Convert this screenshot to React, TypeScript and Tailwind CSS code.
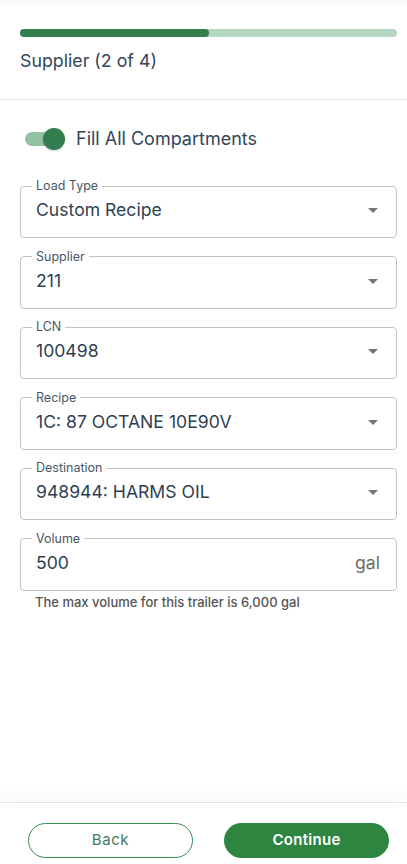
import React from 'react';

interface FieldProps {
  label: string;
  value: string;
  suffix?: string;
  select?: boolean;
}

const ArrowDropDown = () => (
  <svg viewBox="0 0 24 24" className="w-6 h-6 fill-[#757575] shrink-0">
    <path d="M7 10l5 5 5-5z" />
  </svg>
);

const Field = ({ label, value, suffix, select = true }: FieldProps) => (
  <fieldset className="border border-[#c4c4c4] rounded-[4px] px-[15px] m-0 min-w-0">
    <legend className="ml-[-4px] px-[4px] text-[12.5px] leading-[16px] text-[#4a5668]">{label}</legend>
    <div className="h-[43px] pt-[4px] flex items-start justify-between">
      <span className="text-[17.6px] leading-[24px] text-[#2f3f52]">{value}</span>
      {select && (
        <span className="mr-[-4px]">
          <ArrowDropDown />
        </span>
      )}
      {suffix && <span className="text-[17.6px] leading-[24px] text-[#6b6b6b] pr-[1px]">{suffix}</span>}
    </div>
  </fieldset>
);

export default function App() {
  const fields: FieldProps[] = [
    { label: 'Load Type', value: 'Custom Recipe' },
    { label: 'Supplier', value: '211' },
    { label: 'LCN', value: '100498' },
    { label: 'Recipe', value: '1C: 87 OCTANE 10E90V' },
    { label: 'Destination', value: '948944: HARMS OIL' },
  ];

  return (
    <div
      className="h-screen w-full flex flex-col bg-white overflow-hidden"
      style={{ fontFamily: 'Inter, "Noto Sans", sans-serif' }}
    >
      <div className="flex-1 flex flex-col">
        <div className="pl-5 pr-[10px] pt-[29px] pb-[28px] border-b border-[#e8e8e8] shadow-[inset_0_10px_10px_-8px_rgba(0,0,0,0.06)]">
          <div className="h-[8px] rounded-full bg-[#b4d6c3] flex">
            <div className="w-1/2 h-full rounded-full bg-[#347d4f]" />
          </div>
          <p className="mt-[14px] text-[17.8px] leading-[20px] text-[#33465a]">Supplier (2 of 4)</p>
        </div>

        <div className="pl-5 pr-[10px]">
          <div className="flex items-center gap-[11px] mt-[28px] ml-[5px]">
            <div className="relative w-[40px] h-[22px] flex items-center">
              <div className="w-[40px] h-[14px] rounded-full bg-[#93c2a3]" />
              <div className="absolute right-0 top-0 w-[22px] h-[22px] rounded-full bg-[#347d4f] shadow-[0_1px_2px_rgba(0,0,0,0.2)]" />
            </div>
            <span className="text-[18px] leading-[22px] text-[#33465a]">Fill All Compartments</span>
          </div>

          <div className="mt-[28px] flex flex-col gap-[10.5px]">
            {fields.map(f => (
              <Field key={f.label} label={f.label} value={f.value} />
            ))}
            <div>
              <Field label="Volume" value="500" suffix="gal" select={false} />
              <p className="mt-[3px] ml-[15px] text-[13px] leading-[16px] font-medium text-[#555555]">
                The max volume for this trailer is 6,000 gal
              </p>
            </div>
          </div>
        </div>
      </div>

      <div className="border-t border-[#e3e3e3] shadow-[0_-8px_16px_rgba(0,0,0,0.03)] pt-[20px] pb-[6px] pl-[28px] pr-[18px] flex justify-between">
        <button className="w-[165px] h-[35px] rounded-full border border-[#3c8a4e] text-[#3f7a60] text-[15px] tracking-[0.04em]">
          Back
        </button>
        <button className="w-[165px] h-[35px] rounded-full bg-[#2e8540] text-white text-[15px] font-semibold tracking-[0.02em]">
          Continue
        </button>
      </div>
    </div>
  );
}
